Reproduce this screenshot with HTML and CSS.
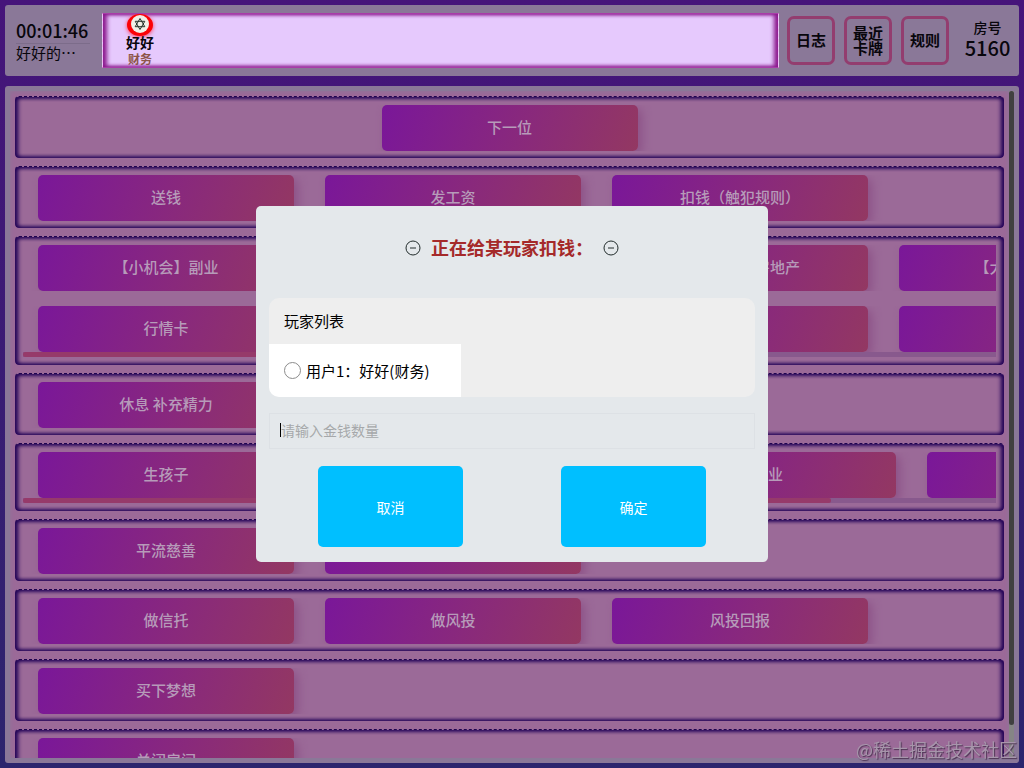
FILE: index.html
```html
<!DOCTYPE html>
<html lang="zh-CN">
<head>
  <meta charset="utf-8" />
  <meta name="viewport" content="width=device-width" />
  <title>房间 5160</title>
  <link rel="stylesheet" href="styles.css">
</head>

<body>
  <header class="topbar">
    <div class="clock">
      <div class="clock-time">00:01:46</div>
      <div class="clock-name">好好的…</div>
    </div>

    <div class="players">
      <div class="player">
        <svg class="player-avatar" viewBox="0 0 28 20" width="28" height="20">
          <ellipse cx="14" cy="11" rx="13" ry="11" fill="#fb0207" />
          <circle cx="14" cy="10" r="9" fill="#f1efe6" />
          <path d="M14 4.500l4.800 8.200H9.200zM14 15.500l-4.800-8.200h9.600z" fill="none" stroke="#26332b" stroke-width="1" />
        </svg>
        <div class="player-name">好好</div>
        <div class="player-role">财务</div>
      </div>
    </div>

    <nav class="tools">
      <button type="button" class="tool">日志</button>
      <button type="button" class="tool">最近<br>卡牌</button>
      <button type="button" class="tool">规则</button>
    </nav>

    <div class="room">
      <div class="room-label">房号</div>
      <div class="room-number">5160</div>
    </div>
  </header>

  <main class="board">
    <div class="board-scroll">
      <section class="group group-center">
        <div class="actions"><button type="button" class="action">下一位</button></div>
      </section>
      <section class="group">
        <div class="actions">
          <button type="button" class="action">送钱</button>
          <button type="button" class="action">发工资</button>
          <button type="button" class="action">扣钱（触犯规则）</button>
        </div>
      </section>
      <section class="group">
        <div class="actions">
          <button type="button" class="action">【小机会】副业</button>
          <button type="button" class="action">【小机会】股票</button>
          <button type="button" class="action">【小机会】房地产</button>
          <button type="button" class="action">【大机会】企业</button>
        </div>
        <div class="actions actions-next">
          <button type="button" class="action">行情卡</button>
          <button type="button" class="action">买入</button>
          <button type="button" class="action">卖出</button>
          <button type="button" class="action">贷款</button>
        </div>
        <div class="hbar"><div class="hbar-thumb hbar-thumb-short"></div></div>
      </section>
      <section class="group">
        <div class="actions"><button type="button" class="action">休息 补充精力</button></div>
      </section>
      <section class="group">
        <div class="actions">
          <button type="button" class="action">生孩子</button>
          <button type="button" class="action action-wide">意外支出</button>
          <button type="button" class="action">失业</button>
          <button type="button" class="action">恢复</button>
        </div>
        <div class="hbar"><div class="hbar-thumb"></div></div>
      </section>
      <section class="group">
        <div class="actions">
          <button type="button" class="action">平流慈善</button>
          <button type="button" class="action">慈善</button>
        </div>
      </section>
      <section class="group">
        <div class="actions">
          <button type="button" class="action">做信托</button>
          <button type="button" class="action">做风投</button>
          <button type="button" class="action">风投回报</button>
        </div>
      </section>
      <section class="group">
        <div class="actions"><button type="button" class="action">买下梦想</button></div>
      </section>
      <section class="group">
        <div class="actions"><button type="button" class="action">关闭房间</button></div>
      </section>
    </div>
    <div class="vbar"><div class="vbar-thumb"></div></div>
  </main>

  <div class="overlay">
    <form class="dialog" role="dialog" aria-labelledby="dialog-title">
      <div class="dialog-head">
        <svg viewBox="0 0 16 16" width="16" height="16"><circle cx="8" cy="8" r="7" /><path d="M5 8h6" /></svg>
        <h2 id="dialog-title" class="dialog-title">正在给某玩家扣钱：</h2>
        <svg viewBox="0 0 16 16" width="16" height="16"><circle cx="8" cy="8" r="7" /><path d="M5 8h6" /></svg>
      </div>

      <fieldset class="picker">
        <legend class="picker-title">玩家列表</legend>
        <label class="picker-item">
          <input type="radio" name="player" value="1" />
          <span>用户1：好好(财务)</span>
        </label>
      </fieldset>

      <input class="money" type="text" name="money" aria-label="金钱数量" placeholder="请输入金钱数量" autocomplete="off" />

      <div class="dialog-buttons">
        <button type="button" class="dialog-button">取消</button>
        <button type="submit" class="dialog-button">确定</button>
      </div>
    </form>
  </div>

  <div class="watermark">@稀土掘金技术社区</div>
</body>
</html>
```

FILE: styles.css
```css
* {
  box-sizing: border-box;
}

body {
  display: flex;
  flex-direction: column;
  gap: 10px;
  height: 100vh;
  margin: 0;
  padding: 5px;
  overflow: hidden;
  background: linear-gradient(#46147a, #2b256d);
  color: #08060c;
  font-family: "Noto Sans CJK SC", sans-serif;
  font-size: 15px;
}

button,
input {
  font-family: inherit;
}

/* top bar */
.topbar {
  display: flex;
  align-items: center;
  flex: none;
  padding: 8px;
  border-radius: 3px;
  background-color: #8a7898;
}

.clock {
  width: 89px;
  padding: 0 0 3px 3px;
}

.clock-time {
  width: 74px;
  border-bottom: 1px solid #7c6c8a;
  font-size: 18px;
  font-weight: 500;
  line-height: 26px;
}

.clock-name {
  line-height: 18px;
}

.players {
  flex: 1;
  height: 55px;
  overflow: hidden;
  border: 1px solid #a83ca8;
  border-right: 1px dashed #f0b8f0;
  border-left: 1px dashed #f0b8f0;
  background-color: #e6c9fd;
  box-shadow: inset 4px 0 4px #8c1a8e, inset -4px 0 4px #8c1a8e, inset 0 0 3px #b050b8;
}

.player {
  display: flex;
  flex-direction: column;
  align-items: center;
  width: 74px;
  font-weight: 700;
}

.player-avatar {
  overflow: visible;
  filter: drop-shadow(0 1px 2px #fb3a60);
}

.player-name {
  font-size: 14px;
  line-height: 16px;
  z-index: 1;
}

.player-role {
  color: #8d5548;
  font-size: 12px;
  line-height: 18px;
}

.tools {
  display: flex;
  gap: 9px;
  margin-left: 8px;
}

.tool {
  width: 48px;
  height: 49px;
  padding: 0 0 2px;
  border: 3px solid #933d6f;
  border-radius: 7px;
  background: none;
  color: inherit;
  font-size: 15px;
  font-weight: 700;
  line-height: 15px;
}

.room {
  width: 62px;
  padding: 0 0 6px 15px;
  text-align: center;
  font-weight: 500;
}

.room-label {
  font-size: 14px;
  line-height: 20px;
}

.room-number {
  font-size: 20px;
  line-height: 22px;
}

/* action board */
.board {
  display: flex;
  flex: 1;
  min-height: 0;
  padding: 5px;
  border-radius: 3px;
  background-color: #8a7898;
}

.board-scroll {
  display: flex;
  flex: 1;
  flex-direction: column;
  gap: 8px;
  min-width: 0;
  padding: 5px;
  overflow: hidden;
  background-color: #9b6a98;
  box-shadow: inset 0 0 4px #8a7898;
}

.group {
  flex: none;
  padding: 8px 8px 7px;
  border-top: 1px dashed #1e0450;
  border-radius: 4px;
  background-color: #9b6a98;
  box-shadow: inset 3px 0 4px #240458, inset -3px 0 4px #240458, inset 0 0 4px #240458;
}

.actions {
  display: flex;
  gap: 31px;
  padding: 0 15px;
  overflow: hidden;
}

.group-center .actions {
  justify-content: center;
}

.actions-next {
  margin-top: 15px;
}

.action {
  flex: none;
  width: 256px;
  height: 46px;
  padding: 0 0 3px;
  border: none;
  border-radius: 5px;
  background: linear-gradient(110deg, #7a1799, #89297c 55%, #933862);
  box-shadow: 4px 4px 10px #8d5287;
  color: #b69bb9;
  font-size: 15px;
  font-weight: 500;
}

.action-wide {
  width: 284px;
}

.hbar {
  height: 5px;
  margin-bottom: 8px;
  background-color: #88598d;
}

.group .hbar:last-child {
  margin-bottom: 1px;
}

.hbar-thumb {
  width: 83%;
  height: 5px;
  border-radius: 2px;
  background-color: #963a6a;
}

.hbar-thumb-short {
  width: 72%;
}

.vbar {
  width: 5px;
  background-color: #858585;
}

.vbar-thumb {
  height: 95%;
  border-radius: 3px;
  background-color: #404040;
}

/* dialog */
.overlay {
  position: fixed;
  inset: 0;
  z-index: 2;
  display: flex;
  align-items: center;
  justify-content: center;
}

.dialog {
  width: 50%;
  padding: 26px 13px 15px;
  border-radius: 5px;
  background-color: #e4e8eb;
}

.dialog-head {
  display: flex;
  align-items: center;
  justify-content: center;
  gap: 10px;
  height: 32px;
  margin-bottom: 34px;
}

.dialog-head svg {
  fill: none;
  stroke: #222c2c;
  stroke-width: 1;
}

.dialog-title {
  margin: 0;
  padding-bottom: 2px;
  color: #a52a2a;
  font-size: 18px;
  font-weight: 700;
}

.picker {
  margin: 0 0 16px;
  padding: 0;
  overflow: hidden;
  border: none;
  border-radius: 10px;
  background-color: #eeeeee;
}

.picker-title {
  float: left;
  width: 100%;
  padding: 0 15px;
  color: #000;
  line-height: 46px;
}

.picker-item {
  display: flex;
  clear: both;
  align-items: center;
  gap: 5px;
  width: 192px;
  height: 53px;
  padding-left: 15px;
  background-color: #fff;
  color: #000;
}

.picker-item input {
  width: 17px;
  height: 17px;
  margin: 0;
  appearance: none;
  border: 1px solid #8c8c8c;
  border-radius: 50%;
  background-color: #fff;
}

.picker-item input:checked {
  border: 5px solid #00bfff;
}

.money {
  display: block;
  width: 100%;
  height: 36px;
  margin-bottom: 17px;
  padding: 0 11px 3px;
  border: 1px solid #dde1e5;
  outline: none;
  /* text cursor shown before the field gets focus */
  background: linear-gradient(#000, #000) 10px 9px / 1px 14px no-repeat;
  font-size: 14px;
}

.money:focus {
  background: none;
}

.money::placeholder {
  color: #a6a8aa;
}

.dialog-buttons {
  display: flex;
  justify-content: space-around;
}

.dialog-button {
  width: 145px;
  height: 81px;
  border: none;
  border-radius: 5px;
  background-color: #00bfff;
  color: #fff;
  font-size: 14px;
}

.watermark {
  position: fixed;
  right: 7px;
  bottom: 6px;
  color: #a795ab;
  font-size: 18px;
  line-height: 26px;
  text-shadow: 1px 1px 1px #4b3352;
  pointer-events: none;
}
```
